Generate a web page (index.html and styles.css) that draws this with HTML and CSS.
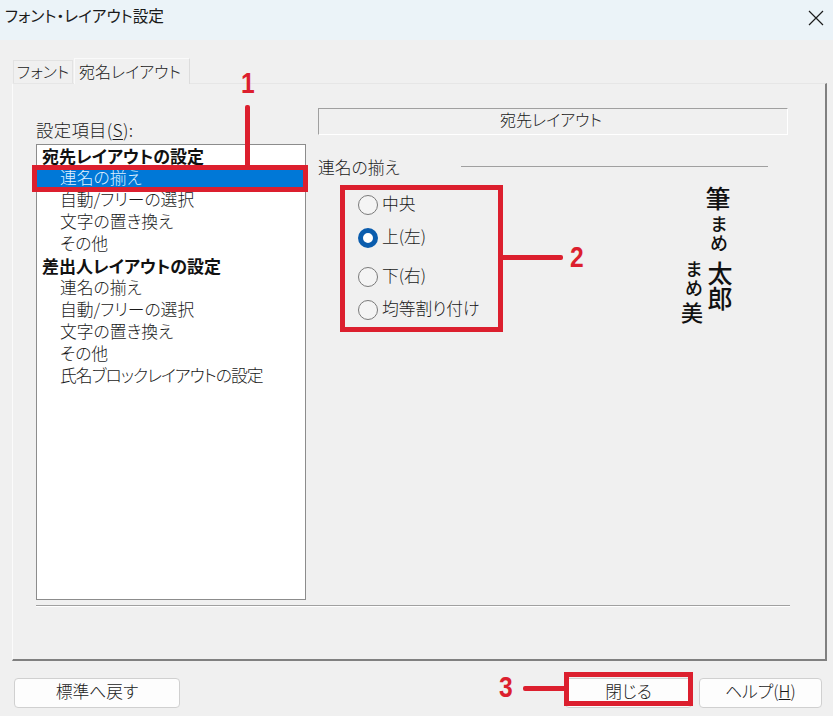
FILE: index.html
```html
<!DOCTYPE html>
<html lang="ja">
<head>
<meta charset="utf-8">
<title>フォント・レイアウト設定</title>
<link rel="stylesheet" href="styles.css">
</head>
<body>
<div class="dialog">
  <header class="titlebar">
    <span class="title">フォント・レイアウト設定</span>
    <svg class="close" width="16" height="16" viewBox="0 0 16 16"><path d="M1 1L15 15M15 1L1 15" fill="none" stroke="#1c1c1c" stroke-width="1.2"/></svg>
  </header>
  <nav class="tabs">
    <span class="tab">フォント</span>
    <span class="tab tab-active">宛名レイアウト</span>
  </nav>
  <main class="panel">
    <div class="columns">
      <section class="left">
        <label class="list-label">設定項目(<u>S</u>):</label>
        <ul class="list">
          <li class="group">宛先レイアウトの設定</li>
          <li class="item selected">連名の揃え</li>
          <li class="item">自動/フリーの選択</li>
          <li class="item">文字の置き換え</li>
          <li class="item">その他</li>
          <li class="group">差出人レイアウトの設定</li>
          <li class="item">連名の揃え</li>
          <li class="item">自動/フリーの選択</li>
          <li class="item">文字の置き換え</li>
          <li class="item">その他</li>
          <li class="item tight">氏名ブロックレイアウトの設定</li>
        </ul>
      </section>
      <section class="right">
        <div class="heading">宛先レイアウト</div>
        <div class="legend"><span class="legend-text">連名の揃え</span><span class="legend-line"></span></div>
        <div class="options">
          <div class="radios">
            <div class="radio r1"><span class="dot"></span><span class="radio-text">中央</span></div>
            <div class="radio r2"><span class="dot checked"></span><span class="radio-text">上(左)</span></div>
            <div class="radio r3"><span class="dot"></span><span class="radio-text">下(右)</span></div>
            <div class="radio r4"><span class="dot"></span><span class="radio-text">均等割り付け</span></div>
          </div>
          <div class="preview">
            <span class="brush brush-a">筆</span>
            <span class="brush brush-b">まめ</span>
            <span class="brush brush-c">太郎</span>
            <span class="brush brush-d">まめ</span>
            <span class="brush brush-e">美</span>
          </div>
        </div>
      </section>
    </div>
    <div class="separator"></div>
  </main>
  <footer class="footer">
    <button class="btn btn-reset">標準へ戻す</button>
    <button class="btn btn-close">閉じる</button>
    <button class="btn btn-help">ヘルプ(<u>H</u>)</button>
  </footer>

  <div class="mark box box1"></div>
  <div class="mark box box2"></div>
  <div class="mark box box3"></div>
  <div class="mark line line1"></div>
  <div class="mark line line2"></div>
  <div class="mark line line3"></div>
  <span class="num num1">1</span>
  <span class="num num2">2</span>
  <span class="num num3">3</span>
</div>
</body>
</html>
```
FILE: styles.css
```css
* { box-sizing: border-box; }
html, body { margin: 0; padding: 0; }
body { width: 833px; height: 716px; overflow: hidden; background: #f0f0f0; }
.dialog {
  position: relative;
  width: 833px;
  height: 716px;
  font-family: "Noto Sans CJK JP", "Noto Sans", sans-serif;
  font-feature-settings: "palt";
  font-size: 16.8px;
  font-weight: 300;
  color: #1a1a1a;
  background: #f0f0f0;
}
.titlebar {
  height: 40px;
  background: #ebf3f8;
  display: flex;
  align-items: center;
  justify-content: space-between;
  padding: 0 9px 9px 5px;
}
.title { font-size: 15.7px; line-height: 20px; font-weight: 400; }
.close { margin-top: 4px; }
.tabs {
  height: 43px;
  padding: 17px 0 0 13px;
  display: flex;
  align-items: flex-end;
}
.tab {
  height: 23px;
  width: 60px;
  background: #f0f0f0;
  border: 1px solid #e2e2e2;
  border-bottom: 0;
  text-align: center;
  font-size: 16px;
  line-height: 20px;
  margin-right: 1px;
}
.tab-active {
  height: 26px;
  width: 116px;
  line-height: 25px;
  padding-right: 4px;
  border-color: #fafafa #dcdcdc #f0f0f0 #fafafa;
  position: relative;
  top: 1px;
  z-index: 1;
}
.panel {
  margin-left: 12px;
  width: 815px;
  height: 578px;
  border-style: solid;
  border-width: 1px 2px 2px 1px;
  border-color: #e6e6e6 #808080 #808080 #fbfbfb;
  padding: 24px 0 0 23px;
}
.columns { display: flex; gap: 12px; }
.left { width: 270px; }
.list-label { display: flex; height: 36px; align-items: flex-end; line-height: 22px; padding-bottom: 3px; font-size: 17.4px; letter-spacing: .3px; }
.list-label u { text-underline-offset: 2px; }
.list {
  list-style: none;
  margin: 0;
  padding: 1px 0 0 0;
  height: 456px;
  background: #fff;
  border: 1px solid #8c8c8c;
}
.group, .item { height: 22px; line-height: 19px; white-space: nowrap; }
.group { padding-left: 5px; font-weight: 700; font-size: 17px; line-height: 19px; color: #111; }
.item { padding-left: 23px; }
.tight { letter-spacing: -.95px; }
.selected { background: #0078d7; color: #dff0ff; }
.right { width: 470px; }
.heading {
  height: 27px;
  border-style: solid;
  border-width: 1px;
  border-color: #a0a0a0 #fff #fff #a0a0a0;
  text-align: center;
  font-size: 16px;
  line-height: 20px;
  padding-right: 4px;
}
.legend { display: flex; height: 24px; margin-top: 23px; line-height: 18px; }
.legend-text { width: 143px; }
.legend-line { width: 307px; height: 1px; margin-top: 8px; background: #a0a0a0; }
.options { display: flex; }
.radios { width: 340px; padding: 12px 0 0 40px; }
.radio { display: flex; align-items: center; height: 22px; gap: 4px; }
.radio-text { margin-bottom: 5px; }
.r2 { margin-top: 11px; }
.r3 { margin-top: 17px; }
.r4 { margin-top: 11px; }
.dot {
  width: 20px;
  height: 20px;
  border: 1px solid #7a7a7a;
  border-radius: 50%;
  background: #f4f4f4;
}
.checked { border: 5.5px solid #0a5cad; background: #fff; }
.preview { position: relative; width: 130px; height: 160px; color: #111; }
.brush { position: absolute; writing-mode: vertical-rl; font-weight: 500; line-height: 1; font-feature-settings: normal; }
.brush-a { left: 47px; top: 4px; font-size: 25px; }
.brush-b { left: 52px; top: 33px; font-size: 18px; letter-spacing: 1px; }
.brush-c { left: 49px; top: 79px; font-size: 25px; }
.brush-d { left: 27px; top: 78px; font-size: 18px; letter-spacing: 1px; }
.brush-e { left: 23px; top: 120px; font-size: 22px; }
.separator { width: 754px; height: 2px; margin-top: 5px; background: #a0a0a0; border-bottom: 1px solid #fff; }
.footer { position: relative; height: 56px; }
.btn {
  position: absolute;
  top: 17px;
  height: 30px;
  font: inherit;
  font-feature-settings: inherit;
  color: #1a1a1a;
  background: #fdfdfd;
  border: 1px solid #d0d0d0;
  border-radius: 4px;
  padding: 0 0 5px;
}
.btn-reset { left: 14px; width: 166px; }
.btn-close { left: 565px; width: 127px; }
.btn-help { left: 699px; width: 123px; }
.mark { position: absolute; }
.box { border: 5px solid #dc1f2e; }
.box1 { left: 32px; top: 165px; width: 276px; height: 27px; }
.box2 { left: 340px; top: 185px; width: 163px; height: 147px; }
.box3 { left: 564px; top: 672px; width: 129px; height: 34px; }
.line { background: #dc1f2e; border-radius: 2px; }
.line1 { left: 245px; top: 105px; width: 5px; height: 62px; }
.line2 { left: 500px; top: 255px; width: 63px; height: 5px; }
.line3 { left: 523px; top: 686px; width: 44px; height: 5px; }
.num {
  position: absolute;
  font-family: "Liberation Sans", sans-serif;
  font-weight: 700;
  font-size: 29px;
  line-height: 29px;
  color: #dc1f2e;
  transform: scaleX(0.85);
  transform-origin: left center;
}
.num1 { left: 241px; top: 69px; }
.num2 { left: 570px; top: 243px; }
.num3 { left: 499px; top: 673px; }
```
